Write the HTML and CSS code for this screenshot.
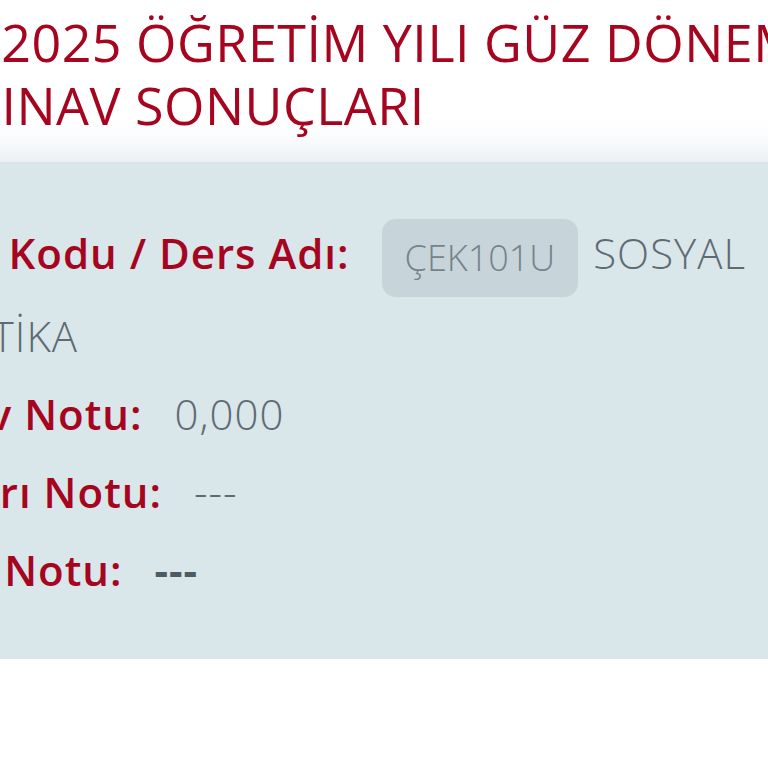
FILE: index.html
```html
<!DOCTYPE html>
<html lang="tr">
<head>
    <meta charset="UTF-8">
    <meta name="viewport" content="width=device-width, initial-scale=1.0">
    <title>Sınav Sonuçları</title>
    <link rel="stylesheet" href="styles.css">
</head>
<body>

    <div class="screen">
        <h1 class="page-title">2024-2025 ÖĞRETİM YILI GÜZ DÖNEMİ ARA SINAV SONUÇLARI</h1>

        <div class="result-card">
            <p class="row">
                <span class="label">Ders Kodu / Ders Adı:</span><span class="code">ÇEK101U</span> <span class="value">SOSYAL POLİTİKA</span>
            </p>
            <p class="row">
                <span class="label">Sınav Notu:</span><span class="value">0,000</span>
            </p>
            <p class="row">
                <span class="label">Başarı Notu:</span><span class="value">---</span>
            </p>
            <p class="row">
                <span class="label">Harf Notu:</span><span class="value grade">---</span>
            </p>
        </div>
    </div>

</body>
</html>
```

FILE: styles.css
```css
body {
    margin: 0;
    background: #ffffff;
    font-family: "Open Sans", Lato, sans-serif;
    overflow: hidden;
}
.screen {
    width: 1100px;
    margin-left: -141px;
}
.page-title {
    margin: 0;
    padding: 10px 115px 0 0;
    text-indent: 4px;
    font-size: 52px;
    line-height: 63px;
    letter-spacing: 0.5px;
    font-weight: 400;
    color: #a6051f;
}
.result-card {
    margin-top: 26px;
    padding: 52px 150px 50px 40px;
    background: #d9e6ea;
    box-shadow: 0 0 40px rgba(200, 215, 222, 0.75);
}
.row {
    margin: 0;
    font-size: 42px;
    line-height: 78px;
    letter-spacing: 1px;
    color: #5f6b72;
}
.label {
    font-weight: 600;
    color: #a6051f;
    margin-right: 32px;
}
.value {
    font-weight: 300;
}
.code {
    display: inline-block;
    vertical-align: middle;
    height: 78px;
    line-height: 78px;
    padding: 0 23px;
    border-radius: 14px;
    background: #c7d4d9;
    color: #75838a;
    font-size: 36px;
    letter-spacing: 0;
    font-weight: 300;
    margin-right: 3px;
}
.grade {
    font-weight: 700;
    color: #4d5b62;
}
```
